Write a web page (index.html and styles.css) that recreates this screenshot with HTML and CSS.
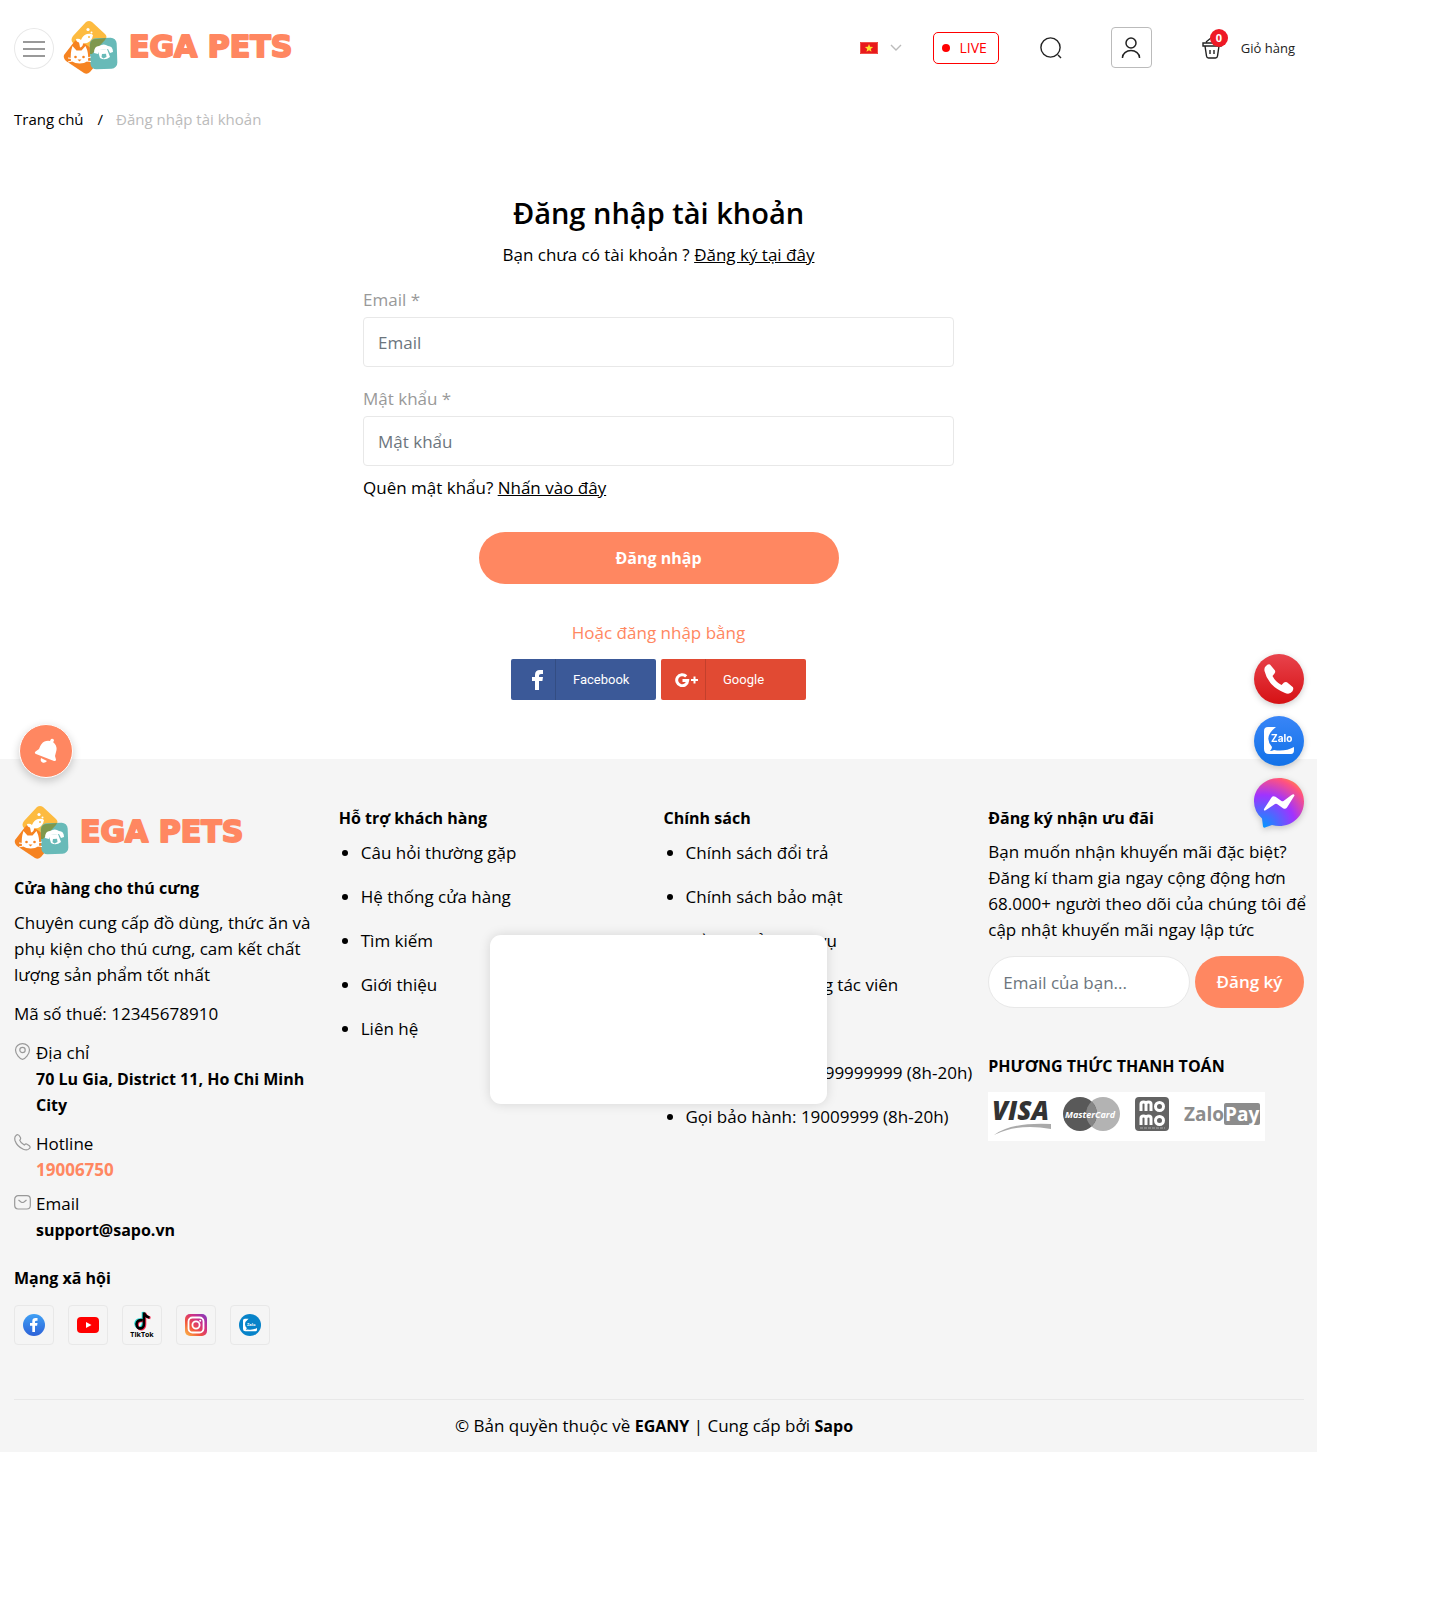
FILE: index.html
```html
<!DOCTYPE html>
<html lang="vi">
<head>
<meta charset="utf-8">
<meta name="viewport" content="width=device-width, initial-scale=1">
<title>Đăng nhập tài khoản - EGA PETS</title>
<link rel="stylesheet" href="styles.css">
</head>
<body>
<svg class="defs" width="0" height="0" aria-hidden="true">
  <defs>
    <linearGradient id="g-red" x1="0" y1="0" x2="0" y2="1"><stop offset="0" stop-color="#e8434c"/><stop offset="1" stop-color="#d61114"/></linearGradient>
    <linearGradient id="g-blue" x1="0" y1="0" x2="0" y2="1"><stop offset="0" stop-color="#3985f7"/><stop offset="1" stop-color="#1272e8"/></linearGradient>
    <linearGradient id="g-fb" x1="0" y1="0" x2="0" y2="1"><stop offset="0" stop-color="#3fa0f5"/><stop offset="1" stop-color="#2d62d8"/></linearGradient>
    <radialGradient id="g-msg" cx="0.17" cy="1" r="1.1"><stop offset="0" stop-color="#0099ff"/><stop offset="0.6" stop-color="#a033ff"/><stop offset="0.93" stop-color="#ff5280"/><stop offset="1" stop-color="#ff7061"/></radialGradient>
    <linearGradient id="g-ig" x1="0" y1="1" x2="1" y2="0"><stop offset="0" stop-color="#fdc04a"/><stop offset="0.35" stop-color="#f2553c"/><stop offset="0.65" stop-color="#cf2f86"/><stop offset="1" stop-color="#7b3bc4"/></linearGradient>
    <symbol id="logo" viewBox="0 0 230 55">
      <path d="M23 2q3-2 6 0l13 12q3 3 0 6L30 35q-3 3-6 0L10 23q-3-3 0-7z" fill="#fdbb40"/>
      <path d="M11 22q3-4 7-1l18 13q3 3 1 6L27 52q-3 3-6 1L3 41q-3-3-2-6z" fill="#f68321"/>
      <rect x="27" y="18" width="27" height="31" rx="6" fill="#68bab8" transform="rotate(-2 40 33)"/>
      <path d="M27 24q1-5 6-5l10-1-1 2-13 14h-2z" fill="#7f984d"/>
      <path d="M13 19q3-1 5 1 2-5 6-6 4-1 6 1-1 6-6 8l-4 .5q0 3-3 4-.5-3-1-5-3-1-3-3.500z" fill="#fff"/>
      <circle cx="26" cy="17" r="1" fill="#fdbb40"/><circle cx="25" cy="9.500" r="1.600" fill="#fff"/><circle cx="28.500" cy="12.500" r="1" fill="#fff"/>
      <path d="M8 41q-1-8 1.500-15l4 4.500h5L22.500 26Q26 33 25 41q-8 5-17 0z" fill="#fff"/>
      <path d="M5 38l4 .5M5 42l4-1M24 38l4-1M24 41l4 .5" stroke="#fff"/>
      <circle cx="12.500" cy="37" r="1.300" fill="#f68321"/><circle cx="20.500" cy="37" r="1.300" fill="#f68321"/><path d="M14.500 39.500h4l-2 2z" fill="#f68321"/>
      <path d="M31 33q0-7 5-7 5-3 9 0 5 0 5 6l-3 1-2-4-8 1-2 4z" fill="#fff"/>
      <path d="M36 30l8-1 3 8q-5 4-10 1-2-4-1-8z" fill="#fff"/><path d="M39 34l4-.3.500 3.300-3 1.500-2-1.500z" fill="#68bab8"/>
      <text class="logo-word" x="66" y="37">EGA PETS</text>
    </symbol>
    <symbol id="zalo-bubble" viewBox="0 0 30 27"><path d="M12 0H4Q0 0 0 4v18q0 5 5 5h22q3 0 3-4v-3q-9 5-20 3-2 1-4 1 2-2 2-4Q-1 10 12 0z" fill="#fff"/></symbol>
  </defs>
</svg>

<div class="page">
  <header class="header">
    <button class="menu-button" type="button" aria-label="Menu"><span class="menu-bar"></span><span class="menu-bar"></span><span class="menu-bar"></span></button>
    <a class="logo-link" href="#" aria-label="EGA PETS"><svg class="logo" width="230" height="55"><use href="#logo"/></svg></a>
    <nav class="tools" aria-label="Công cụ">
      <button class="language" type="button" aria-label="Tiếng Việt">
        <svg width="18" height="12" viewBox="0 0 18 12"><rect width="18" height="12" fill="#e8191c"/><path d="M.5.500h17v11H.5z" fill="none" stroke="#f0504a"/><path d="M9 2l1.100 2.800 3 .2-2.300 1.900.7 2.900L9 8.200 6.500 9.800l.7-2.900L4.900 5l3-.2z" fill="#ffde2e"/></svg>
        <svg width="12" height="7" viewBox="0 0 12 7"><path d="M1 1l5 5 5-5" fill="none" stroke="#bbb" stroke-width="1.400"/></svg>
      </button>
      <a class="live" href="#"><span class="live-dot"></span>LIVE</a>
      <button class="plain-button" type="button" aria-label="Tìm kiếm"><svg width="22" height="22" viewBox="0 0 22 22" fill="none" stroke="#222" stroke-width="1.400"><circle cx="10.500" cy="10.500" r="9.600"/><path d="M18 18l3 3"/></svg></button>
      <a class="account" href="#" aria-label="Tài khoản"><svg width="20" height="22" viewBox="0 0 20 22" fill="none" stroke="#222" stroke-width="1.500"><circle cx="10" cy="6" r="5"/><path d="M1.500 21v-.5a8.500 7 0 0 1 17 0v.5"/></svg></a>
      <a class="cart" href="#">
        <span class="cart-icon"><svg width="20" height="22" viewBox="0 0 20 22" fill="none" stroke="#222" stroke-width="1.400"><path d="M1 6h18v3H1zM3 9l1.500 10q.3 2 2 2h7q1.700 0 2-2L17 9M8 13v4M12 13v4M4 5l5-4M16 5l-4-4"/></svg><span class="badge">0</span></span>
        <span>Giỏ hàng</span>
      </a>
    </nav>
  </header>

  <nav class="breadcrumb" aria-label="Breadcrumb"><a href="#">Trang chủ</a><span>/</span><span class="current">Đăng nhập tài khoản</span></nav>

  <main class="login">
    <h1>Đăng nhập tài khoản</h1>
    <p class="intro">Bạn chưa có tài khoản ? <a href="#">Đăng ký tại đây</a></p>
    <form class="login-form">
      <label for="email">Email *</label>
      <input class="field" id="email" type="email" placeholder="Email">
      <label for="password">Mật khẩu *</label>
      <input class="field" id="password" type="password" placeholder="Mật khẩu">
      <p class="forgot">Quên mật khẩu? <a href="#">Nhấn vào đây</a></p>
      <button class="submit" type="submit">Đăng nhập</button>
    </form>
    <p class="or">Hoặc đăng nhập bằng</p>
    <div class="social-login">
      <a class="social-button facebook" href="#"><span class="social-mark"><svg width="11" height="20" viewBox="0 0 11 20"><path d="M3 20V11H0V7h3V5q0-5 5-5h3v4H9Q7 4 7 5.500V7h4l-.6 4H7v9z" fill="#fff"/></svg></span><span class="social-name">Facebook</span></a>
      <a class="social-button google" href="#"><span class="social-mark"><svg width="24" height="14" viewBox="0 0 24 14"><path d="M11.200 3.400A5.500 5.500 0 1 0 12.700 7.500H7.500" fill="none" stroke="#fff" stroke-width="3"/><path d="M16 7h7M19.500 3.500v7" stroke="#fff" stroke-width="2"/></svg></span><span class="social-name">Google</span></a>
    </div>
  </main>

  <footer class="footer">
    <div class="footer-columns">
      <section>
        <a class="logo-link footer-logo" href="#" aria-label="EGA PETS"><svg class="logo" width="230" height="55"><use href="#logo"/></svg></a>
        <h2>Cửa hàng cho thú cưng</h2>
        <p class="about">Chuyên cung cấp đồ dùng, thức ăn và phụ kiện cho thú cưng, cam kết chất lượng sản phẩm tốt nhất</p>
        <p class="tax">Mã số thuế: 12345678910</p>
        <ul class="contacts">
          <li class="contact-address"><svg width="17" height="17" viewBox="0 0 17 17" fill="none" stroke="#999" stroke-width="1.200"><path d="M8.500 16.300C6 16.300 1.500 11 1.500 7a7 6.300 0 0 1 14 0c0 4-4.500 9.300-7 9.300z"/><circle cx="8.500" cy="7" r="2.700"/></svg><div>Địa chỉ<strong>70 Lu Gia, District 11, Ho Chi Minh City</strong></div></li>
          <li><svg width="17" height="17" viewBox="0 0 17 17" fill="none" stroke="#999" stroke-width="1.200"><path d="M2 1.500Q4-.3 5.500 2l1 1.800Q7 5 5.700 6.200q.6 2.500 4.600 4.800 1.500-1.500 2.700-.8l2.300 1.500q1.600 1.500 0 2.800-2 2.500-6 .7Q3 12.500 1 6.500.2 3 2 1.500z"/></svg><div>Hotline<a class="phone" href="tel:19006750">19006750</a></div></li>
          <li><svg width="17" height="17" viewBox="0 0 17 17" fill="none" stroke="#999" stroke-width="1.200"><rect x=".700" y="1.700" width="15.600" height="13.300" rx="3.500"/><path d="M4.500 6l2.500 2q1.500 1 3 0l2.500-2"/></svg><div>Email<a href="mailto:support@sapo.vn">support@sapo.vn</a></div></li>
        </ul>
        <h2>Mạng xã hội</h2>
        <div class="networks">
          <a href="#" aria-label="Facebook"><svg width="22" height="22" viewBox="0 0 22 22"><circle cx="11" cy="11" r="11" fill="url(#g-fb)"/><path d="M9.300 18v-6.200H7V9h2.300V7.300Q9.300 4 12.500 4h2v2.700h-1.300q-1.200 0-1.200 1.300v1h2.500l-.4 2.800H12V18z" fill="#fff"/></svg></a>
          <a href="#" aria-label="YouTube"><svg width="22" height="22" viewBox="0 0 22 22"><rect y="3" width="22" height="16" rx="4" fill="#f00"/><path d="M9 8l5.500 3L9 14z" fill="#fff"/></svg></a>
          <a class="tiktok" href="#" aria-label="TikTok"><svg width="19" height="20" viewBox="0 0 19 20" fill="none" stroke-width="2.600"><path d="M8.500 8.500Q3 8 2.500 12.500q.5 5 5 4Q10 15.500 10 12V1q1 4 5.500 5" stroke="#25d9d2"/><path d="M10.500 10Q5 9 4.500 14q.5 5 5 4 2.500-1 2.500-4.500V2q1 4 5.500 5" stroke="#fe2c55"/><path d="M9.500 9.200Q4 8.500 3.500 13.200q.5 5 5 4 2.500-1 2.500-4.500V1.500q1 4 5.500 5" stroke="#000"/></svg><span>TikTok</span></a>
          <a href="#" aria-label="Instagram"><svg width="22" height="22" viewBox="0 0 22 22"><rect width="22" height="22" rx="5" fill="url(#g-ig)"/><g fill="none" stroke="#fff" stroke-width="1.800"><rect x="3.500" y="3.500" width="15" height="15" rx="4"/><circle cx="11" cy="11" r="3.600"/></g><circle cx="15.200" cy="6.800" r="1" fill="#fff"/></svg></a>
          <a href="#" aria-label="Zalo"><svg width="22" height="22" viewBox="0 0 22 22"><circle cx="11" cy="11" r="11" fill="#0783c9"/><use href="#zalo-bubble" x="4" y="4" width="14" height="14"/><text class="zalo-tiny" x="8" y="12">Zalo</text></svg></a>
        </div>
      </section>
      <section>
        <h2>Hỗ trợ khách hàng</h2>
        <ul class="links">
          <li><a href="#">Câu hỏi thường gặp</a></li>
          <li><a href="#">Hệ thống cửa hàng</a></li>
          <li><a href="#">Tìm kiếm</a></li>
          <li><a href="#">Giới thiệu</a></li>
          <li><a href="#">Liên hệ</a></li>
        </ul>
      </section>
      <section>
        <h2>Chính sách</h2>
        <ul class="links">
          <li><a href="#">Chính sách đổi trả</a></li>
          <li><a href="#">Chính sách bảo mật</a></li>
          <li><a href="#">Điều khoản dịch vụ</a></li>
          <li><a href="#">Chương trình cộng tác viên</a></li>
          <li><a href="#">Liên hệ</a></li>
          <li><a href="#">Gọi mua hàng: 0999999999 (8h-20h)</a></li>
          <li><a href="#">Gọi bảo hành: 19009999 (8h-20h)</a></li>
        </ul>
      </section>
      <section>
        <h2>Đăng ký nhận ưu đãi</h2>
        <p class="offer">Bạn muốn nhận khuyến mãi đặc biệt? Đăng kí tham gia ngay cộng động hơn 68.000+ người theo dõi của chúng tôi để cập nhật khuyến mãi ngay lập tức</p>
        <form class="newsletter">
          <input type="email" placeholder="Email của bạn..." aria-label="Email của bạn">
          <button type="submit">Đăng ký</button>
        </form>
        <h2>PHƯƠNG THỨC THANH TOÁN</h2>
        <svg class="payments" width="277" height="49" viewBox="0 0 277 49" role="img" aria-label="Visa, MasterCard, MoMo, ZaloPay">
          <rect width="277" height="49" fill="#fff"/>
          <text class="pay-visa" x="4" y="28">VISA</text>
          <path d="M6 43Q24 30 63 32v5Q30 31 6 43z" fill="#aaa"/>
          <circle cx="115" cy="22" r="17" fill="#b3b3b3"/><circle cx="92" cy="22" r="17" fill="#595959"/>
          <path d="M103.500 9.500a17 17 0 0 1 0 25 17 17 0 0 1 0-25z" fill="#858585"/>
          <text class="pay-master" x="77" y="26">MasterCard</text>
          <rect x="147" y="5" width="34" height="34" rx="4" fill="#636363"/>
          <g fill="none" stroke="#fff" stroke-width="3"><path d="M153 19v-7q0-2 2.500-2t2.500 2v7M158 12q0-2 2.500-2t2.500 2v7M153 33v-7q0-2 2.500-2t2.500 2v7M158 26q0-2 2.500-2t2.500 2v7"/><circle cx="171.500" cy="14.500" r="4"/><circle cx="171.500" cy="28.500" r="4"/></g><path d="M152 36h25" stroke="#aaa" stroke-dasharray="3 1"/>
          <text class="pay-zalo" x="196" y="29">Zalo</text>
          <rect x="236" y="11" width="36" height="22" rx="2" fill="#8c8c8c"/>
          <text class="pay-zalo pay-light" x="237" y="29">Pay</text>
        </svg>
      </section>
    </div>
    <p class="copyright">© Bản quyền thuộc về <strong>EGANY</strong> | Cung cấp bởi <strong>Sapo</strong></p>
  </footer>

  <button class="bell" type="button" aria-label="Thông báo"><svg width="24" height="26" viewBox="0 0 24 26" fill="#fff"><path d="M17 1q3-1 3 2l-1 1q4 3 3.500 8L21 18l1 3.500q0 2-2 1.500L2 16q-2-1-.5-2.500L5 11q2-6 5.500-7.500Q13 2.500 16 3z"/><path d="M7 20l6 3q-2 2.500-4.500 1.500T7 20z"/></svg></button>
  <div class="contact-stack">
    <a href="tel:19006750" aria-label="Gọi điện"><svg width="50" height="50" viewBox="0 0 50 50"><circle cx="25" cy="25" r="25" fill="url(#g-red)"/><path d="M11.500 12.500Q14 9.500 16 10.500l5 6q.8 1.500-.5 3L18.500 22q3 6 9 9l2.500-2.500q1.500-1 3-.3l6 5q1 2-.5 4-3 4-8 1.500Q14 32 10.500 17q-.5-3 1-4.500z" fill="#fff"/></svg></a>
    <a href="#" aria-label="Zalo"><svg width="50" height="50" viewBox="0 0 50 50"><circle cx="25" cy="25" r="25" fill="url(#g-blue)"/><use href="#zalo-bubble" x="10" y="11" width="30" height="27"/><text class="zalo-word" x="17" y="26">Zalo</text></svg></a>
    <a href="#" aria-label="Messenger"><svg width="50" height="50" viewBox="0 0 50 50"><path d="M25 0C11 0 0 10 0 23.500q0 10 8 17l1 8q.3 1.500 2 1l7-2.500q3.500 1 7 1c14 0 25-10.500 25-24.500S39 0 25 0z" fill="url(#g-msg)"/><path d="M10 31l7.500-11.500q1.500-2 4-.7l6 4.200q1 .6 2 0l8-6q2.500-1.500 3 .5L33 29.500q-1.500 2-4 .7L23 26q-1-.6-2 0l-9 6q-2.500 1.500-2-1z" fill="#fff"/></svg></a>
  </div>
  <div class="popup" role="dialog" aria-label="Thông báo"></div>
</div>
</body>
</html>
```
FILE: styles.css
```css
* { box-sizing: border-box; }
body { margin: 0; background: #fff; color: #000; font: 17px/26px "Open Sans", "Noto Sans", sans-serif; }
h1, h2, p, ul { margin: 0; padding: 0; }
h2 { font-size: 16px; line-height: 26px; font-weight: 700; }
a { color: inherit; text-decoration: none; }
button, input { font: inherit; }
button { padding: 0; border: 0; background: none; cursor: pointer; }
svg { display: block; flex: none; }
.defs { position: absolute; }
.page { position: relative; max-width: 1317px; }

.logo-word { font: 700 30px "DejaVu Sans", sans-serif; fill: #ff8761; stroke: #ff8761; stroke-width: 2px; stroke-linejoin: round; }

.header { display: flex; align-items: center; padding: 20px 13px 20px 14px; }
.menu-button { display: flex; flex-direction: column; align-items: center; justify-content: center; gap: 5px; width: 40px; height: 41px; margin: 2px 9px 0 0; border: 1px solid #e8e8e8; border-radius: 50%; }
.menu-bar { width: 22px; height: 2px; background: #999; }
.tools { display: flex; align-items: center; margin-left: auto; }
.language { display: flex; align-items: center; gap: 12px; margin-right: 31px; }
.live { display: flex; align-items: center; gap: 9px; height: 32px; margin-right: 41px; padding: 0 11px 0 8px; border: 1px solid #f00; border-radius: 5px; color: #f00; font-size: 14px; }
.live-dot { width: 8px; height: 8px; border-radius: 50%; background: #f00; }
.account { display: flex; align-items: center; justify-content: center; width: 41px; height: 41px; margin: 0 50px 0 49px; border: 1px solid #bbb; border-radius: 4px; }
.cart { display: flex; align-items: center; gap: 19px; padding-right: 9px; color: #222; font-size: 13px; }
.cart-icon { position: relative; }
.badge { position: absolute; top: -8px; left: 8px; width: 18px; height: 18px; border-radius: 50%; background: #ee1926; color: #fff; font-size: 11px; font-weight: 700; line-height: 18px; text-align: center; }

.breadcrumb { display: flex; padding: 12px 14px; font-size: 15px; line-height: 24px; }
.breadcrumb span { margin-left: 14px; }
.breadcrumb .current { margin-left: 13px; color: #bbb; }

.login { display: flex; flex-direction: column; align-items: center; padding: 50px 13px 59px; }
.login h1 { font-size: 29px; line-height: 40px; font-weight: 600; }
.intro { margin-top: 9px; }
.intro a, .forgot a { text-decoration: underline; }
.login-form { display: flex; flex-direction: column; width: 100%; max-width: 591px; }
.login-form label { margin: 19px 0 4px; color: #999; }
.field { width: 100%; height: 50px; padding: 0 14px; border: 1px solid #e8e8e8; border-radius: 4px; background: #fff; }
.field::placeholder, .newsletter input::placeholder { color: #6c757d; opacity: 1; }
.forgot { margin-top: 9px; }
.submit { align-self: center; width: 100%; max-width: 360px; height: 52px; margin-top: 31px; border-radius: 26px; background: #ff8761; color: #fff; font-size: 16px; font-weight: 700; }
.or { margin: 36px 0 13px; color: #ff8761; }
.social-login { display: flex; gap: 5px; }
.social-button { display: flex; width: 145px; height: 41px; border-radius: 2px; color: #fff; font: 13px/41px Roboto, sans-serif; }
.social-mark { display: flex; align-items: center; justify-content: center; width: 45px; padding-left: 8px; border-right: 1px solid #0002; }
.social-name { padding-left: 17px; }
.facebook { background: #3b5998; }
.google { background: #e14a33; }

.footer { padding: 46px 13px 13px 14px; background: #f5f5f5; }
.footer-columns { display: grid; grid-template-columns: repeat(4, minmax(0, 1fr)); gap: 9px; padding-bottom: 54px; border-bottom: 1px solid #e8e8e8; }
.footer-logo { display: block; margin-bottom: 15px; }
.about { margin-top: 9px; }
.offer { margin: 8px -8px 0 0; }
.tax { margin: 13px 0; }
.contacts { display: flex; flex-direction: column; gap: 8px; margin-bottom: 22px; list-style: none; }
.contacts li { display: flex; gap: 5px; }
.contacts .contact-address { margin-bottom: 5px; }
.contacts svg { margin-top: 3px; }
.contacts strong, .contacts a { display: block; font-size: 16px; font-weight: 700; }
.contacts .phone { color: #ff8761; font-size: 17px; }
.networks { display: flex; gap: 14px; margin-top: 14px; }
.networks a { display: flex; flex-direction: column; align-items: center; justify-content: center; width: 40px; height: 40px; border: 1px solid #e8e8e8; border-radius: 4px; }
.tiktok { font: 700 7px/8px "Open Sans", sans-serif; }
.zalo-tiny { font: 700 4px "Open Sans", sans-serif; fill: #fff; }
.links { display: flex; flex-direction: column; gap: 18px; margin-top: 9px; padding-left: 22px; }
.newsletter { display: flex; gap: 5px; margin: 13px 0 45px; }
.newsletter input { flex: 1; min-width: 0; height: 52px; padding: 0 14px; border: 1px solid #e8e8e8; border-radius: 26px; background: #fff; }
.newsletter button { width: 109px; height: 52px; border-radius: 26px; background: #ff8761; color: #fff; font-weight: 600; }
.payments { margin-top: 13px; overflow: visible; }
.pay-visa { font: italic 800 26px "Open Sans", sans-serif; fill: #333; }
.pay-master { font: italic 700 9px "Open Sans", sans-serif; fill: #fff; }
.pay-zalo { font: 700 19px "Open Sans", sans-serif; fill: #8c8c8c; }
.pay-light { fill: #fff; }
.copyright { margin-top: 13px; padding-right: 10px; text-align: center; }
.copyright strong { font-size: 16px; font-weight: 700; }

.bell { position: absolute; top: 724px; left: 19px; display: flex; align-items: center; justify-content: center; width: 54px; height: 54px; border: 1px solid #fff; border-radius: 50%; background: #ff8761; box-shadow: 0 3px 8px #0003; }
.contact-stack { position: absolute; top: 654px; right: 13px; display: flex; flex-direction: column; gap: 12px; }
.contact-stack svg { filter: drop-shadow(0 2px 3px #0003); }
.zalo-word { font: 700 10px Inter, sans-serif; fill: #fff; }
.popup { position: absolute; top: 935px; left: 50%; width: 337px; height: 169px; margin-left: -169px; border-radius: 11px; background: #fff; box-shadow: 0 0 12px #0002; }
```
